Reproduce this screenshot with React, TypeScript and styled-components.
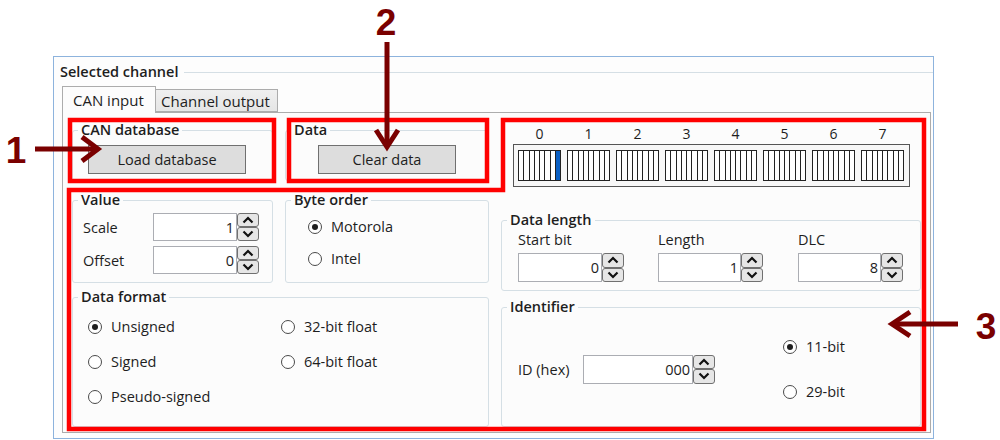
import React from "react";
import styled, { createGlobalStyle } from "styled-components";

const GlobalStyle = createGlobalStyle`
  html, body {
    margin: 0;
    padding: 0;
    background: #ffffff;
  }
  body {
    font-family: "Open Sans", "Noto Sans", sans-serif;
    font-size: 14.5px;
    color: #1e1e1e;
  }
`;

const Page = styled.div`
  position: relative;
  width: 1000px;
  height: 440px;
  box-sizing: border-box;
  padding: 56px 0 0 53px;
  overflow: hidden;
  background: #ffffff;
`;

const Window = styled.div`
  width: 881px;
  height: 383px;
  box-sizing: border-box;
  border: 1px solid #8db3dd;
  background: #fdfdfd;
  padding: 6px 2px 5px 6px;
  display: flex;
  flex-direction: column;
`;

const Header = styled.div`
  display: flex;
  align-items: center;
  gap: 6px;
  height: 18px;
  margin-right: -2px;
  font-weight: 600;
  line-height: 18px;
`;

const HeaderLine = styled.div`
  flex: 1;
  height: 1px;
  background: #d5dfe5;
`;

const Tabs = styled.div`
  flex: 1;
  display: flex;
  flex-direction: column;
  margin: 5px 0 0 2px;
  min-height: 0;
`;

const TabStrip = styled.div`
  display: flex;
  align-items: flex-end;
  height: 26px;
`;

const Tab = styled.div<{ $active?: boolean; $w: number }>`
  position: relative;
  z-index: ${p => (p.$active ? 2 : 1)};
  box-sizing: border-box;
  width: ${p => p.$w}px;
  height: ${p => (p.$active ? 27 : 23)}px;
  margin-bottom: ${p => (p.$active ? -1 : 0)}px;
  margin-left: ${p => (p.$active ? 0 : -1)}px;
  padding: ${p => (p.$active ? "3px 0 0 10px" : "1px 0 0 5px")};
  border: 1px solid #acacac;
  border-bottom: ${p => (p.$active ? "none" : "1px solid #acacac")};
  background: ${p => (p.$active ? "#fcfcfc" : "linear-gradient(#f0f0f0, #e5e5e5)")};
  font-size: 15px;
  line-height: 20px;
  white-space: nowrap;
`;

const Panel = styled.div`
  flex: 1;
  box-sizing: border-box;
  border: 1px solid #acacac;
  background: #fcfcfc;
  padding: 8px 9px 5px 9px;
  display: grid;
  grid-template-columns: 417px 420px;
  column-gap: 12px;
`;

const Column = styled.div`
  display: flex;
  flex-direction: column;
  min-height: 0;
`;

const Pair = styled.div<{ $gapTop?: number }>`
  display: grid;
  grid-template-columns: 201px 204px;
  column-gap: 12px;
  margin-top: ${p => p.$gapTop || 0}px;
`;

const Group = styled.fieldset<{ $grow?: boolean; $gapTop?: number }>`
  margin: ${p => p.$gapTop || 0}px 0 0 0;
  min-width: 0;
  padding: 0;
  box-sizing: border-box;
  border: 1px solid #d5dfe5;
  border-radius: 3px;
  display: flex;
  flex-direction: column;
  ${p => p.$grow && "flex: 1;"}
`;

const Legend = styled.legend`
  margin-left: 5px;
  padding: 0 3px;
  font-weight: 600;
  line-height: 18px;
  color: #1e1e1e;
`;

const ButtonBody = styled.div<{ $center?: boolean }>`
  display: flex;
  justify-content: ${p => (p.$center ? "center" : "flex-start")};
  padding: 6px 0 6px ${p => (p.$center ? 0 : 15)}px;
`;

const Button = styled.button<{ $w: number }>`
  width: ${p => p.$w}px;
  height: 29px;
  padding: 0;
  border: 1px solid #707070;
  background: #dddddd;
  font-family: inherit;
  font-size: 14.5px;
  color: #1e1e1e;
`;

const ValueBody = styled.div`
  display: grid;
  grid-template-columns: 70px auto;
  row-gap: 5px;
  align-items: center;
  padding: 4px 0 8px 10px;
`;

const RadioStack = styled.div<{ $gap: number }>`
  display: flex;
  flex-direction: column;
  gap: ${p => p.$gap}px;
`;

const OrderBody = styled(RadioStack)`
  padding: 9px 0 0 22px;
`;

const FormatBody = styled.div`
  display: grid;
  grid-template-columns: 193px auto;
  row-gap: 17px;
  align-content: start;
  padding: 12px 0 0 15px;
`;

const RadioRow = styled.label`
  display: flex;
  align-items: center;
  gap: 9px;
  height: 18px;
  line-height: 18px;
  white-space: nowrap;
`;

const RadioDot = styled.span<{ $on?: boolean }>`
  width: 14px;
  height: 14px;
  box-sizing: border-box;
  border: 1px solid #4a4a4a;
  border-radius: 50%;
  background: #ffffff;
  display: flex;
  align-items: center;
  justify-content: center;
  &::after {
    content: "";
    width: 6px;
    height: 6px;
    border-radius: 50%;
    background: ${p => (p.$on ? "#1e1e1e" : "transparent")};
  }
`;

const NumField = styled.div<{ $h: number }>`
  display: flex;
  height: ${p => p.$h}px;
`;

const NumInput = styled.input<{ $w: number }>`
  width: ${p => p.$w}px;
  box-sizing: border-box;
  margin: 0;
  padding: 0 2px 0 0;
  border: 1px solid #abadb3;
  background: #ffffff;
  text-align: right;
  font-family: inherit;
  font-size: 14.5px;
  color: #1e1e1e;
  outline: none;
`;

const Spinner = styled.div`
  display: flex;
  flex-direction: column;
  width: 22px;
`;

const SpinButton = styled.div`
  flex: 1;
  box-sizing: border-box;
  border: 1px solid #707070;
  border-radius: 3px;
  background: #e6e6e6;
  display: flex;
  align-items: center;
  justify-content: center;
`;

const BitLabels = styled.div`
  display: grid;
  grid-template-columns: repeat(8, 43px);
  column-gap: 6px;
  margin: 4px 0 0 17px;
  height: 18px;
  line-height: 18px;
  font-size: 14px;
  text-align: center;
`;

const BitFrame = styled.div`
  width: 397px;
  height: 43px;
  box-sizing: border-box;
  margin: 1px 0 0 12px;
  padding: 5px 4px;
  border: 1px solid #555555;
  background: #f7f7f7;
  display: grid;
  grid-template-columns: repeat(8, 43px);
  column-gap: 6px;
`;

const Byte = styled.div`
  display: flex;
  border: 1px solid #222222;
  background: #ffffff;
`;

const Bit = styled.div<{ $on?: boolean }>`
  flex: 1;
  border-right: 1px solid #222222;
  background: ${p => (p.$on ? "#0a5fc4" : "#ffffff")};
  &:last-child {
    border-right: none;
  }
`;

const LengthBody = styled.div`
  display: grid;
  grid-template-columns: repeat(3, 140px);
  padding: 2px 0 8px 16px;
`;

const Field = styled.div`
  display: flex;
  flex-direction: column;
  gap: 4px;
`;

const FieldLabel = styled.div`
  line-height: 18px;
`;

const IdBody = styled.div`
  flex: 1;
  display: flex;
  align-items: center;
  padding: 0 0 4px 16px;
`;

const IdLabel = styled.div`
  width: 65px;
`;

const IdRadios = styled(RadioStack)`
  margin-left: 68px;
`;

const Overlay = styled.svg`
  position: absolute;
  left: 0;
  top: 0;
  width: 1000px;
  height: 440px;
  pointer-events: none;
`;

const Chevron = ({ up }: { up?: boolean }) => (
  <svg width="12" height="8" viewBox="0 0 12 8">
    <path
      d={up ? "M1.5 6.5 L6 2 L10.5 6.5" : "M1.5 1.5 L6 6 L10.5 1.5"}
      fill="none"
      stroke="#111"
      strokeWidth="2.2"
    />
  </svg>
);

const Spin = ({ value, w, h = 29 }: { value: string; w: number; h?: number }) => (
  <NumField $h={h}>
    <NumInput $w={w} value={value} readOnly />
    <Spinner>
      <SpinButton>
        <Chevron up />
      </SpinButton>
      <SpinButton>
        <Chevron />
      </SpinButton>
    </Spinner>
  </NumField>
);

const Radio = ({ label, on }: { label: string; on?: boolean }) => (
  <RadioRow>
    <RadioDot $on={on} />
    {label}
  </RadioRow>
);

const bytes = [0, 1, 2, 3, 4, 5, 6, 7];

const App: React.FunctionComponent = () => {
  return (
    <Page>
      <GlobalStyle />
      <Window>
        <Header>
          Selected channel
          <HeaderLine />
        </Header>
        <Tabs>
          <TabStrip>
            <Tab $active $w={94}>
              CAN input
            </Tab>
            <Tab $w={123}>Channel output</Tab>
          </TabStrip>
          <Panel>
            <Column>
              <Pair>
                <Group>
                  <Legend>CAN database</Legend>
                  <ButtonBody>
                    <Button $w={158}>Load database</Button>
                  </ButtonBody>
                </Group>
                <Group>
                  <Legend>Data</Legend>
                  <ButtonBody $center>
                    <Button $w={138}>Clear data</Button>
                  </ButtonBody>
                </Group>
              </Pair>
              <Pair $gapTop={10}>
                <Group>
                  <Legend>Value</Legend>
                  <ValueBody>
                    <span>Scale</span>
                    <Spin value="1" w={84} h={28} />
                    <span>Offset</span>
                    <Spin value="0" w={84} h={28} />
                  </ValueBody>
                </Group>
                <Group>
                  <Legend>Byte order</Legend>
                  <OrderBody $gap={14}>
                    <Radio label="Motorola" on />
                    <Radio label="Intel" />
                  </OrderBody>
                </Group>
              </Pair>
              <Group $grow $gapTop={5}>
                <Legend>Data format</Legend>
                <FormatBody>
                  <Radio label="Unsigned" on />
                  <Radio label="32-bit float" />
                  <Radio label="Signed" />
                  <Radio label="64-bit float" />
                  <Radio label="Pseudo-signed" />
                </FormatBody>
              </Group>
            </Column>
            <Column>
              <BitLabels>
                {bytes.map(b => (
                  <span key={b}>{b}</span>
                ))}
              </BitLabels>
              <BitFrame>
                {bytes.map(b => (
                  <Byte key={b}>
                    {bytes.map(i => (
                      <Bit key={i} $on={b === 0 && i === 7} />
                    ))}
                  </Byte>
                ))}
              </BitFrame>
              <Group $gapTop={24}>
                <Legend>Data length</Legend>
                <LengthBody>
                  <Field>
                    <FieldLabel>Start bit</FieldLabel>
                    <Spin value="0" w={84} />
                  </Field>
                  <Field>
                    <FieldLabel>Length</FieldLabel>
                    <Spin value="1" w={83} />
                  </Field>
                  <Field>
                    <FieldLabel>DLC</FieldLabel>
                    <Spin value="8" w={83} />
                  </Field>
                </LengthBody>
              </Group>
              <Group $grow $gapTop={7}>
                <Legend>Identifier</Legend>
                <IdBody>
                  <IdLabel>ID (hex)</IdLabel>
                  <Spin value="000" w={110} />
                  <IdRadios $gap={27}>
                    <Radio label="11-bit" on />
                    <Radio label="29-bit" />
                  </IdRadios>
                </IdBody>
              </Group>
            </Column>
          </Panel>
        </Tabs>
      </Window>

      <Overlay viewBox="0 0 1000 440">
        <g fill="none" stroke="#ff0000" strokeWidth="4.5">
          <rect x="70" y="120" width="204" height="61" />
          <rect x="289" y="120" width="198" height="61" />
          <polygon points="503,120 924,120 924,429 69,429 69,190 503,190" />
        </g>
        <g fill="none" stroke="#7a0000" strokeWidth="5" strokeLinecap="butt">
          <line x1="35" y1="149" x2="96" y2="149" />
          <polyline points="82,137 98,149 82,161" />
          <line x1="387" y1="42" x2="387" y2="145" />
          <polyline points="376,130 387,147 398,130" />
          <line x1="958" y1="324" x2="894" y2="324" />
          <polyline points="910,312 892,324 910,336" />
        </g>
        <g
          fill="#7a0000"
          fontFamily="'Liberation Sans', Arial, sans-serif"
          fontWeight="700"
          fontSize="37"
          textAnchor="middle"
        >
          <text x="16" y="163">1</text>
          <text x="386" y="35">2</text>
          <text x="986" y="339">3</text>
        </g>
      </Overlay>
    </Page>
  );
};

export default App;
